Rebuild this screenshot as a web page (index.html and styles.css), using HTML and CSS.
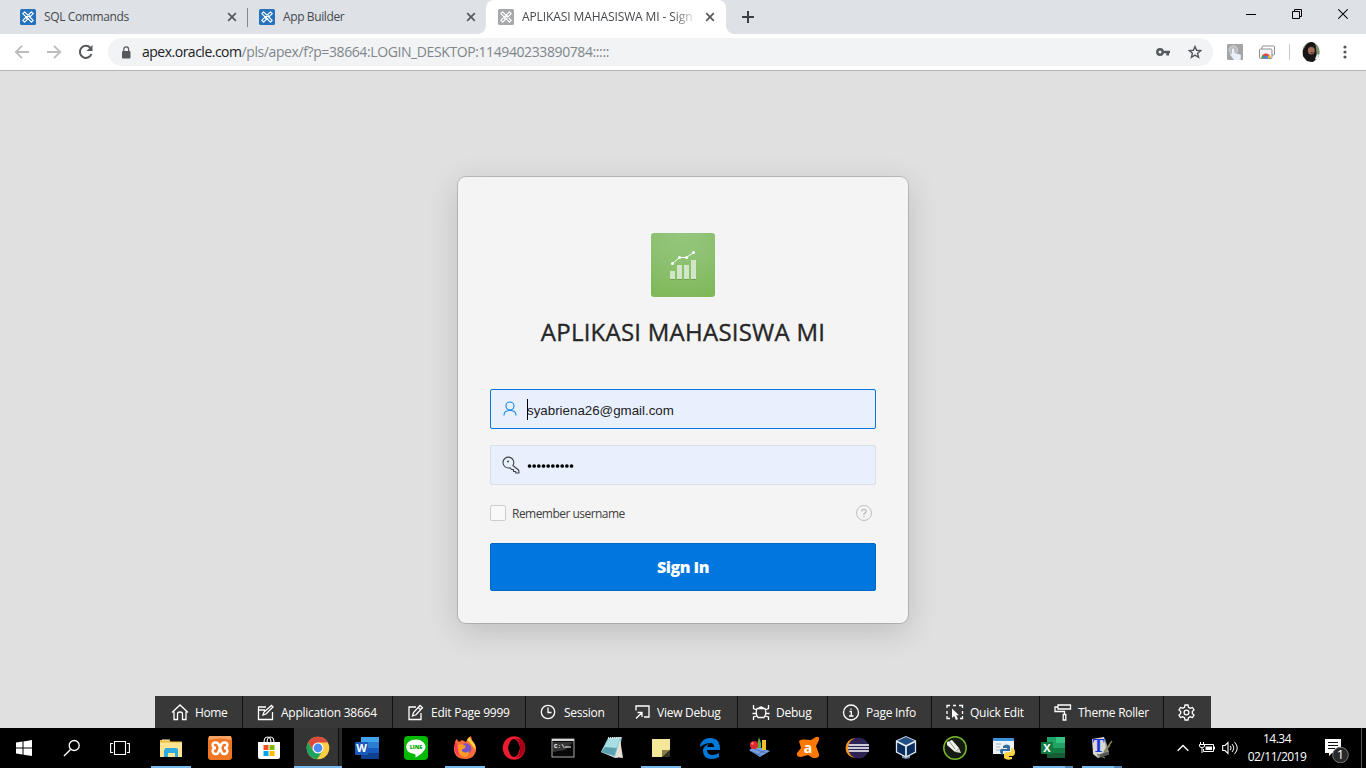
FILE: index.html
```html
<!DOCTYPE html>
<html lang="id">
<head>
<meta charset="utf-8">
<title>APLIKASI MAHASISWA MI - Sign In</title>
<link rel="stylesheet" href="styles.css">
</head>
<body>
<svg class="defs" width="0" height="0">
  <symbol id="apex" viewBox="0 0 16 16">
    <rect width="16" height="16" rx="1.5" fill="currentColor"/>
    <path d="M2.800 4.600 4.600 2.800 13.200 11.400 11.400 13.200ZM2.800 11.400 11.400 2.800 13.200 4.600 4.600 13.200Z" fill="currentColor" stroke="#fff" stroke-width="1.2" stroke-linejoin="round"/>
    <path d="M6.200 9.800 9.800 6.200" stroke="#fff" stroke-width="1"/>
  </symbol>
  <symbol id="close" viewBox="0 0 10 10"><path d="M1.2 1.2 8.8 8.8M8.8 1.2 1.2 8.8" stroke="#55595d" stroke-width="1.7"/></symbol>
</svg>

<header class="browser">
  <div class="tabs">
    <div class="tab tab-first"><svg class="favicon"><use href="#apex"/></svg><span class="tab-title">SQL Commands</span><svg class="tab-close"><use href="#close"/></svg></div>
    <div class="tab tab-second"><svg class="favicon"><use href="#apex"/></svg><span class="tab-title">App Builder</span><svg class="tab-close"><use href="#close"/></svg></div>
    <div class="tab tab-active"><svg class="favicon"><use href="#apex"/></svg><span class="tab-title">APLIKASI MAHASISWA MI - Sign</span><svg class="tab-close"><use href="#close"/></svg></div>
    <svg class="new-tab" width="12" height="12"><path d="M6 0V12M0 6H12" stroke="#3c4043" stroke-width="2"/></svg>
    <div class="window-controls">
      <svg width="10" height="12"><path d="M0 6.500H10" stroke="#000"/></svg>
      <svg width="10" height="12"><path d="M.5 3.500H7.500V10.500H.5ZM2.500 3V1.500H9.500V8.500H8" fill="none" stroke="#000"/></svg>
      <svg width="10" height="12"><path d="M.3 1.300 9.700 10.700M9.700 1.300.3 10.700" stroke="#000" stroke-width="1.100"/></svg>
    </div>
  </div>
  <div class="toolbar">
    <svg class="nav" width="16" height="16"><path d="M15 8H2M8 1.800 1.800 8 8 14.200" fill="none" stroke="#babcbe" stroke-width="1.800"/></svg>
    <svg class="nav" width="16" height="16"><path d="M1 8H14M8 1.800 14.200 8 8 14.200" fill="none" stroke="#babcbe" stroke-width="1.800"/></svg>
    <svg class="nav" width="16" height="16"><path d="M13.500 10A6 6 0 1 1 12.300 3.800" fill="none" stroke="#55595d" stroke-width="2"/><path d="M14.500 1V7H8.500Z" fill="#55595d"/></svg>
    <div class="address">
      <svg class="lock" width="10" height="13"><rect x="1" y="5" width="8.500" height="7.500" rx="1" fill="#55595d"/><path d="M2.800 5V3.200a2.400 2.400 0 0 1 4.800 0V5" fill="none" stroke="#55595d" stroke-width="1.200"/></svg>
      <span class="url"><span class="host">apex.oracle.com</span><span class="path">/pls/apex/f?p=38664:LOGIN_DESKTOP:114940233890784:::::</span></span>
      <svg class="key" width="14" height="8"><circle cx="4" cy="4" r="2.700" fill="none" stroke="#55595d" stroke-width="2.400"/><path d="M6.500 2.700H14V5.300H13V7.500H10.300V5.300H6.500Z" fill="#55595d"/></svg>
      <svg class="star" width="14" height="14"><path d="M7 1.500 8.600 5.300 12.700 5.600 9.600 8.300 10.600 12.300 7 10.100 3.400 12.300 4.400 8.300 1.300 5.600 5.400 5.300Z" fill="none" stroke="#55595d" stroke-width="1.400"/></svg>
    </div>
    <svg class="ext-hand" width="16" height="16"><rect width="16" height="16" rx="1" fill="#a3a5a7"/><circle cx="6.300" cy="6" r="4.200" fill="#b9bbbd" stroke="#d5d7d9"/><path d="M5 5.500c0-1.500 2.300-1.500 2.300 0V9l6 1.500c1 .3.700 2 .2 5.500H7L3 10.500c0-1 1.300-1 2 0Z" fill="#e9f0fa"/></svg>
    <svg class="ext-cast" width="16" height="15"><rect x="3" y="1" width="12.500" height="9" rx="1" fill="#fff" stroke="#8c8f92"/><rect x=".5" y="4" width="12.500" height="9.500" rx="1" fill="#f4f4f4" stroke="#8c8f92"/><path d="M2.500 13a4.500 4.500 0 0 1 9 0Z" fill="#e9473a"/><path d="M2.500 13a4.500 4.500 0 0 1 1.500-3.300L6 13Z" fill="#35a853"/><path d="M11.500 13A4.500 4.500 0 0 0 10 9.700L8 13Z" fill="#fbbc05"/><circle cx="7" cy="12.200" r="1.800" fill="#4285f4"/></svg>
    <span class="toolbar-rule"></span>
    <svg class="avatar" width="18" height="20"><ellipse cx="9" cy="10" rx="8.700" ry="10" fill="#7d936f"/><path d="M10 0c-6 0-7 6-9 8v6l4 5 6 1 4-4-1-10Q14 1 10 0Z" fill="#171518"/><ellipse cx="9.300" cy="8.500" rx="3.400" ry="4" fill="#a46f59"/><path d="M6 6Q9 2 13 6L9 5Z" fill="#342426"/><path d="M8 10h4l-2 2Z" fill="#5f3434"/><path d="M15 12l2 1-2 5-2-1Z" fill="#ededf0"/></svg>
    <svg class="menu-dots" width="4" height="14" fill="#55595d"><circle cx="2" cy="2" r="1.600"/><circle cx="2" cy="7" r="1.600"/><circle cx="2" cy="12" r="1.600"/></svg>
  </div>
</header>

<main class="page">
  <form class="card">
    <svg class="app-logo" width="64" height="64">
      <defs><radialGradient id="green" cx=".5" cy="0" r="1"><stop offset="0" stop-color="#95c77c"/><stop offset=".5" stop-color="#8dc171"/><stop offset="1" stop-color="#80b95c"/></radialGradient></defs>
      <rect width="64" height="64" rx="3" fill="url(#green)"/>
      <path d="M19 46.500h5m2 0h5m2 0h5m2 0h5" stroke="#6da34e"/>
      <path d="M19 38h5v8h-5ZM26 32h5v14h-5ZM33 32h5v14h-5ZM40 27h5v19h-5Z" fill="#d1e6c6"/>
      <path d="M21.500 30.500 28.500 24.500H35.500L42.500 19.500" fill="none" stroke="#fff"/>
      <g fill="#fff"><circle cx="21.500" cy="30.500" r="1.500"/><circle cx="28.500" cy="24.500" r="1.500"/><circle cx="35.500" cy="24.500" r="1.500"/><circle cx="42.500" cy="19.500" r="1.500"/></g>
    </svg>
    <h1 class="card-title">APLIKASI MAHASISWA MI</h1>
    <div class="field field-focus">
      <svg width="18" height="18"><circle cx="9" cy="6" r="4" fill="none" stroke="currentColor" stroke-width="1.100"/><path d="M3 15.500c0-2.500.8-4 3-4.500 1.500 0 2-.5 3-1 1 .5 1.500 1 3 1 2.200.5 3 2 3 4.500" fill="none" stroke="currentColor" stroke-width="1.100"/></svg>
      <span class="caret"></span><span class="email">syabriena26@gmail.com</span>
    </div>
    <div class="field">
      <svg width="18" height="18"><path d="M10.900 9.500 16.800 14.300 17 17H13.700V15.500H11.500V13.500H9.500L8 11.700A5.400 5.400 0 1 1 10.900 9.500Z" fill="none" stroke="#404040" stroke-width="1.100" stroke-linejoin="round"/><circle cx="6" cy="5.500" r="1" fill="#404040"/></svg>
      <svg class="dots" width="48" height="6"><path d="M2.500 3H46" stroke="#000" stroke-width="3.700" stroke-linecap="round" stroke-dasharray="0 4.670"/></svg>
    </div>
    <div class="remember">
      <span class="checkbox"></span><span class="remember-label">Remember username</span>
      <svg class="help" width="16" height="16"><circle cx="8" cy="8" r="7.500" fill="none" stroke="#c0c0c0"/><path d="M5.800 6.500Q5.800 4.400 8 4.400T10.200 6.400Q10.200 7.600 8 8.800V10M8 11V12.200" fill="none" stroke="#b8b8b8" stroke-width="1.300"/></svg>
    </div>
    <div class="signin"><span>Sign In</span></div>
  </form>

  <nav class="devbar">
    <div class="dev dev-home"><svg><path d="M1 8.500 9 1 17 8.500M3 7.500V15.500H6.500V10Q6.500 8 9 8T11.500 10V15.500H15V7.500"/></svg><span>Home</span></div>
    <div class="dev dev-app"><svg><path d="M9 3H1.500V15.500H15.500V8M1.500 6H8M6 11l1-3 7.500-6.500 1.500 1.500L9 10Z"/></svg><span>Application 38664</span></div>
    <div class="dev dev-edit"><svg><path d="M9 3H2V15.500H14V9M5.500 12 6.500 8.500 13 1.500 15.500 3.800 9 10.800ZM11.200 3.400 13.700 5.700"/></svg><span>Edit Page 9999</span></div>
    <div class="dev dev-session"><svg><circle cx="8" cy="8" r="6.700"/><path d="M8 3.500V8.500H11.500"/></svg><span>Session</span></div>
    <div class="dev dev-view"><svg><path d="M3 6.500V2H16V13H11M3 14.500 9 8.500M4.500 8.500H9V13"/></svg><span>View Debug</span></div>
    <div class="dev dev-debug"><svg><path d="M5 4.500H13Q15 10 12 13.500H6Q3 10 5 4.500ZM6.500 4.500Q9 1.500 11.500 4.500M5 6 1.500 4.500V1M13 6 16.500 4.500V1M4 9.500H.5M14 9.500H17.500M5 12 1.500 13V16M13 12 16.500 13V16"/></svg><span>Debug</span></div>
    <div class="dev dev-info"><svg><circle cx="9" cy="8.500" r="7.500"/><path d="M7.500 7.500H9.300V12M7 12H11.500M9 4.500V5.800"/></svg><span>Page Info</span></div>
    <div class="dev dev-quick"><svg><path d="M1 4V1.500H4M7 1.500H10M13 1.500H16.500V4M1 7V10M1 12V14.500H4M16.500 7V10M16.500 12V14.500H14" /><path d="M6 4.500V14L8.200 12 10 16 12 15 10.200 11.200H13Z" fill="#fff" stroke="none"/></svg><span>Quick Edit</span></div>
    <div class="dev dev-theme"><svg><path d="M4 1H16.500V5H4ZM4 3H1V7.500H10.500V10M9.200 10.500H11.800V16H9.200Z"/></svg><span>Theme Roller</span></div>
    <div class="dev dev-gear"><svg><circle cx="8.500" cy="8.500" r="2.400"/><path d="M7 1H10L10.500 3.300 12.200 4.200 14.500 3.500 16 6 14.300 7.600V9.400L16 11 14.500 13.500 12.200 12.800 10.500 13.700 10 16H7L6.500 13.700 4.800 12.800 2.500 13.500 1 11 2.700 9.400V7.600L1 6 2.500 3.500 4.800 4.200 6.500 3.300Z"/></svg></div>
  </nav>
</main>

<footer class="taskbar">
  <div class="sys"><svg width="16" height="16"><path d="M0 2.500 6.500 1.600V7.500H0ZM7.500 1.400 16 0V7.500H7.500ZM0 8.500H6.500V14.500L0 13.600ZM7.500 8.500H16V16L7.500 14.700Z" fill="#fff"/></svg></div>
  <div class="sys"><svg width="18" height="18"><circle cx="11.200" cy="6.500" r="5" fill="none" stroke="#fff" stroke-width="1.300"/><path d="M7.500 10.500 1 17" stroke="#fff" stroke-width="1.400"/></svg></div>
  <div class="sys"><svg width="20" height="16"><path d="M4.500 1.500H15.500V14.500H4.500ZM3 3.500H.6V12.500H3M17 3.500H19.400V12.500H17" fill="none" stroke="#fff" stroke-width="1.100"/></svg></div>
  <div class="apps">
    <div class="app open"><svg viewBox="0 0 24 24"><path d="M1 4h9l1.500 1.500H23V21H1Z" fill="#e9bb45"/><path d="M1 6.500H23V21H1Z" fill="#ffe592"/><path d="M3 3.500h8v1H3Z" fill="#fff4be"/><path d="M6 13Q6 12 7 12H17Q19 12 19 14V21H16V17H9V21H5V14Z" fill="#2eaae3"/></svg></div>
    <div class="app"><svg viewBox="0 0 24 24"><rect width="24" height="24" rx="3" fill="#ee7623"/><path d="M1 0H23V4Q12 1 1 4Z" fill="#f7a366"/><path d="M8 6.500C3 6 4 12 8 12C3 12 4 18.500 8 18C11 18 11 14.500 12 12C13 14.500 13 18 16 18C20 18.500 21 12 16 12C20 12 21 6 16 6.500C13 6.500 13 9.500 12 12C11 9.500 11 6.500 8 6.500Z" fill="none" stroke="#fff" stroke-width="2.500"/></svg></div>
    <div class="app"><svg viewBox="0 0 24 24"><path d="M7 7Q7 1 10.500 1T14 7M10 7Q10 1 13.500 1T17 7" fill="none" stroke="#fff" stroke-width="1.100"/><path d="M1 6H23V21Q23 23 21 23H3Q1 23 1 21Z" fill="#fff"/><path d="M6.500 9H11.500V14H6.500Z" fill="#f25022"/><path d="M12.500 9H17.500V14H12.500Z" fill="#7fba00"/><path d="M6.500 15H11.500V20H6.500Z" fill="#00a4ef"/><path d="M12.500 15H17.500V20H12.500Z" fill="#ffb900"/></svg></div>
    <div class="app chrome open"><svg viewBox="0 0 24 24"><circle cx="12" cy="12" r="11.300" fill="#ffcd42"/><path d="M2.200 6.300A11.300 11.300 0 0 1 21.900 6.500H12L7.300 14.800Z" fill="#dc4a3d"/><path d="M2.200 6.300A11.300 11.300 0 0 0 11 23.200L16.800 14.700H7Z" fill="#1da260"/><circle cx="12" cy="12" r="5.500" fill="#fff"/><circle cx="12" cy="12" r="4.400" fill="#4c8bf5"/></svg></div>
    <div class="app"><svg viewBox="0 0 24 24"><path d="M6 1H24V7H6Z" fill="#41a5ee"/><path d="M6 6H24V12H6Z" fill="#2b7cd3"/><path d="M6 12H24V17H6Z" fill="#185abd"/><path d="M6 17H24V23H6Z" fill="#103f91"/><rect y="6" width="13" height="13" rx="1" fill="#185abd"/><text x="6.500" y="16.400" class="glyph-word">W</text></svg></div>
    <div class="app"><svg viewBox="0 0 24 24"><rect width="24" height="24" rx="4" fill="#00b900"/><path d="M12 3.500C1 4 0 13 5.500 16.500L11.500 18.500V21.500C18 18 21.500 14 21.500 11 21.500 7 17 3.500 12 3.500Z" fill="#fff"/><text x="12" y="13.200" class="glyph-line">LINE</text></svg></div>
    <div class="app open"><svg viewBox="0 0 24 24"><path d="M2 6 3.500 3 6 6 9 4 13 6 15 2 18 0 19 4Q24 10 23 15C21 21 18 23 12 23 5 23 1 19 1 13Z" fill="#ff6b35"/><path d="M14 4 16.500 1 19 5Q23 8 22.500 14L18 8Z" fill="#ffd53e"/><path d="M2 6Q0 16 6 20.500L4 8Z" fill="#ff365d"/><circle cx="12.500" cy="13" r="5.800" fill="#7852ca"/><path d="M5 9 9 8 13 10 11 13Q8 12 9 15 12 18 16 15 16 21 11 21 4 18 5 9Z" fill="#ff9b24"/></svg></div>
    <div class="app"><svg viewBox="0 0 24 24"><ellipse cx="12" cy="12" rx="8.500" ry="9" fill="none" stroke="#ed1c2e" stroke-width="5.500"/><ellipse cx="12" cy="12" rx="5.500" ry="9" fill="#000"/><path d="M14 2Q24 3 23 12T14 22Q18 19 18 12T14 2Z" fill="#a70014"/></svg></div>
    <div class="app"><svg viewBox="0 0 24 24"><rect x="1" y="3" width="22" height="18" fill="#080808" stroke="#aaa"/><path d="M1 3H23V5H1Z" fill="#d5d5d5"/><path d="M2 6H22L14 14 2 16Z" fill="#343434"/><text x="3" y="11.500" class="glyph-cmd">C:\</text><path d="M14 11H20" stroke="#fff"/></svg></div>
    <div class="app"><svg viewBox="0 0 24 24"><path d="M8 2 22 1 18 22 1 16Z" fill="#81c4d0"/><path d="M9 2 20 1 14 20 1 16Z" fill="#a8dfe5"/><path d="M5 11 17 12 14 20 1 16Z" fill="#5aa2af"/><path d="M20 3 23 22 15 21Z" fill="#e5e1d5"/><path d="M8 2H22" stroke="#d8e0e2" stroke-width="2" stroke-dasharray="1 1"/><path d="M1 16 14 20 18 22 15 22Z" fill="#ccdadb"/></svg></div>
    <div class="app open"><svg viewBox="0 0 24 24"><path d="M3 3H21V14L13 21H3Z" fill="#f4e79a"/><path d="M13 14H21L13 21Z" fill="#877f45"/><path d="M21 14V21H13Z" fill="#353324"/></svg></div>
    <div class="app"><svg viewBox="0 0 24 24"><path d="M2 10Q4 2 12 2 22 2 22 13V14H9Q9 19 15 19 18 19 21 17V21Q18 23 13 23 5 22 5 15 5 10 12 7 7 7 2 11ZM9 11H16Q16 7 12.500 7 9.500 8 9 11Z" fill="#0078d7"/></svg></div>
    <div class="app"><svg viewBox="0 0 24 24"><path d="M2 14 9 10 23 15 13 21Z" fill="#7b9fdd"/><path d="M3 15 15 20M7 13 19 17M10 19 19 14" stroke="#4068b2" stroke-width=".7"/><path d="M10 9 12 1 14 7 14 12H10Z" fill="#5cae45"/><rect x="15" y="4" width="4" height="10" fill="#efc12b"/><circle cx="7" cy="9" r="4" fill="#df2830"/><circle cx="5.500" cy="7.500" r="1.200" fill="#ff7b76"/></svg></div>
    <div class="app"><svg viewBox="0 0 24 24"><path d="M3 5Q5 3 8 3.500L15 4 20 1Q24 0 23 4L20 10 23 18Q24 21 20 22H17L12 19 5 21Q0 21 1 17L5 12Z" fill="#ff7800"/><text x="12" y="16.500" class="glyph-avast">a</text></svg></div>
    <div class="app"><svg viewBox="0 0 24 24"><circle cx="10.500" cy="12" r="10" fill="#f7941e"/><circle cx="13.500" cy="12" r="10.500" fill="#2c2255"/><path d="M3.500 9H24M3 12H24M3.500 15H24" stroke="#fff" stroke-width="1.700"/></svg></div>
    <div class="app"><svg viewBox="0 0 24 24"><path d="M8 17H16V22L12 23 8 22Z" fill="#7588a6"/><path d="M12 .8 21.500 5V16L12 21 2.500 16V5Z" fill="#0c2e5c" stroke="#dce5f0" stroke-width="1.300"/><path d="M12 1 21 5 12 9.500 3 5Z" fill="#214f83"/><path d="M3 5.500 12 10 21 5.500M12 10V20" fill="none" stroke="#e9f0f7" stroke-width="1.700"/></svg></div>
    <div class="app"><svg viewBox="0 0 24 24"><circle cx="12" cy="12" r="11.200" fill="#151b11" stroke="#76b82a" stroke-width="1.500"/><path d="M4 6 9 4 16 12 12 16 4 9Z" fill="#f2f2ec"/><path d="M12 16 16 12 18 17Z" fill="#d8d8cc"/><path d="M6 5 12 13" stroke="#8d9387"/></svg></div>
    <div class="app"><svg viewBox="0 0 24 24"><path d="M1 2H22V18H1Z" fill="#ecf1f6"/><path d="M1 2H22V5H1Z" fill="#3b92dc"/><path d="M4 8H9M4 11H8M4 14H8" stroke="#a8b3bc"/><path d="M11 10Q15 7 18 10V15H11V19Q8 18 8 15T11 13H15V12H11Z" fill="#346c9e"/><path d="M19 12Q23 12 23 16T20 20H17V21H20V23Q15 25 12 22V18L14 16H19Z" fill="#ffd545"/></svg></div>
    <div class="app open stacked"><svg viewBox="0 0 24 24"><path d="M6 1H15V12H6Z" fill="#21a366"/><path d="M15 1H24V7H15Z" fill="#33c481"/><path d="M15 7H24V12H15Z" fill="#21a366"/><path d="M6 12H24V17H6Z" fill="#107c41"/><path d="M6 17H24V22H6Z" fill="#185c37"/><rect y="6" width="12" height="12" rx="1" fill="#107c41"/><text x="6" y="16" class="glyph-word">X</text></svg></div>
    <div class="app open stacked"><svg viewBox="0 0 24 24"><path d="M2 3 14 1 19 17 8 22 3 18Z" fill="#d8d8d8"/><path d="M15 2 19 17 8 22 7 19 16 16Z" fill="#999"/><path d="M11 21 20 9M14 16 22 5M7 18 15 22" stroke="#898256" stroke-width="1.300"/><path d="M10 20 19 17" stroke="#555" stroke-width="3"/><text x="8.500" y="16" class="glyph-t">T</text></svg></div>
  </div>
  <div class="tray">
    <svg class="chevron" width="12" height="8"><path d="M.7 6.800 6 1.500 11.300 6.800" fill="none" stroke="#fff" stroke-width="1.400"/></svg>
    <svg class="battery" width="16" height="12"><path d="M5 2.500H14.500V9.500H4.500V7M15.500 4.500V7.500M1.500 0V3M4.500 0V3M.5 2.500V4Q.5 5.500 3 5.500T5.500 4V2.500H.5M3 6V11" fill="none" stroke="#fff"/><path d="M6.500 4.500H13V8H6.500Z" fill="#fff"/></svg>
    <svg class="sound" width="17" height="14"><path d="M.7 4.500H3L6 1.500V12.500L3 9.500H.7Z" fill="none" stroke="#fff" stroke-width="1.100"/><path d="M8 5Q10 7 8 9M10 3Q13.500 7 10 11M12.500 1Q18 7 12.500 13" fill="none" stroke="#ddd" stroke-width="1.100"/></svg>
    <div class="clock"><span class="time">14.34</span><span class="date">02/11/2019</span></div>
    <svg class="notes" width="24" height="26"><path d="M0 2H16V16H7L4 19V16H0Z" fill="#fff"/><path d="M3 5.500H13M3 8.500H13M3 11.500H10" stroke="#111"/><circle cx="15.500" cy="18" r="7.800" fill="#292929" stroke="#777"/><text x="15.500" y="22.400" class="note-count">1</text></svg>
    <span class="peek"></span>
  </div>
</footer>
</body>
</html>
```
FILE: styles.css
```css
* { box-sizing: border-box; }
body { margin: 0; width: 1366px; height: 768px; overflow: hidden; display: flex; flex-direction: column; font-family: "Open Sans", "Noto Sans", sans-serif; font-size: 12px; background: #e0e0e0; }
svg { display: block; flex: none; }
span { white-space: nowrap; }
.defs { position: absolute; }

/* Browser frame */
.browser { height: 71px; flex: none; border-bottom: 1px solid #b5b3b5; background: #fff; }
.tabs { height: 34px; display: flex; background: #dee1e6; }
.tab { height: 34px; display: flex; align-items: center; color: #45494d; }
.tab-first { width: 248px; padding: 0 11px 0 20px; background: linear-gradient(#85888c, #85888c) 247px 8px / 1px 19px no-repeat; }
.tab-second { width: 238px; padding: 0 10px 0 11px; }
.tab-active { width: 240px; padding: 0 11px 0 12px; background: #fff; border-radius: 8px 8px 0 0; position: relative; }
.tab-active::before, .tab-active::after { content: ""; position: absolute; bottom: 0; width: 8px; height: 8px; }
.tab-active::before { left: -8px; background: radial-gradient(circle at 0 0, transparent 7.500px, #fff 8px); }
.tab-active::after { right: -8px; background: radial-gradient(circle at 100% 0, transparent 7.500px, #fff 8px); }
.favicon { width: 16px; height: 16px; margin-right: 8px; color: #2672bd; }
.tab-active .favicon { color: #a6a9ac; }
.tab-title { flex: 1; margin-right: 10px; line-height: 20px; letter-spacing: -.38px; }
.tab-active .tab-title { flex: none; width: 173px; letter-spacing: -.1px; -webkit-mask-image: linear-gradient(90deg, #000 150px, transparent 176px); mask-image: linear-gradient(90deg, #000 150px, transparent 176px); }
.tab-close { width: 10px; height: 10px; }
.new-tab { margin: 11px 0 0 16px; }
.window-controls { margin: 8px 18px 0 auto; display: flex; gap: 36px; }
.toolbar { height: 36px; display: flex; align-items: center; padding-left: 14px; }
.nav { margin-right: 16px; }
.address { width: 1105px; height: 28px; margin-left: -2px; border-radius: 14px; background: #f1f3f4; display: flex; align-items: center; padding-left: 13px; }
.lock { margin-right: 11px; }
.url { font-size: 14px; line-height: 20px; width: 1014px; color: #80868b; }
.host { color: #202124; letter-spacing: -.5px; }
.path { letter-spacing: -.4px; }
.star { margin-left: 18px; }
.ext-hand { margin-left: 14px; }
.ext-cast { margin-left: 16px; }
.toolbar-rule { width: 1px; height: 16px; background: #c7c9cc; margin-left: 14px; }
.avatar { margin-left: 12px; }
.menu-dots { margin-left: 23px; }

/* Sign-in page */
.page { height: 657px; display: flex; flex-direction: column; align-items: center; padding-top: 106px; background: #e0e0e0; }
.card { width: 450px; height: 446px; border-radius: 8px; background: #f4f4f4; padding: 56px 32px 32px; display: flex; flex-direction: column; box-shadow: 0 0 0 1px rgba(0,0,0,.15), 0 8px 32px rgba(0,0,0,.16); }
.app-logo { align-self: center; }
.card-title { margin: 19px 0 41px; height: 32px; line-height: 32px; font-size: 24px; font-weight: 500; letter-spacing: .24px; -webkit-text-stroke: .35px #262626; color: #262626; text-align: center; white-space: nowrap; }
.field { height: 40px; margin-bottom: 16px; display: flex; align-items: center; border: 1px solid #dcdee3; border-radius: 2px; background: #e8f0fe; padding-left: 11px; }
.field > svg:first-child { margin-right: -1px; }
.field-focus { border-color: #0076df; color: #1685e4; padding-left: 10px; }
.caret { width: 1px; height: 21px; margin-left: 9px; background: #000; }
.email { font-family: "Liberation Sans", Arial, sans-serif; font-size: 13.330px; color: #202124; margin: 2px 0 0 -1px; }
.dots { margin: 2px 0 0 8px; }
.remember { height: 24px; display: flex; align-items: center; padding-right: 4px; color: #404040; }
.remember-label { letter-spacing: -.53px; }
.checkbox { width: 16px; height: 16px; border: 1px solid #ccc; border-radius: 2px; background: #f9f9f9; margin-right: 6px; }
.help { margin-left: auto; }
.signin { height: 48px; margin-top: 18px; border: 1px solid #0069c7; border-radius: 2px; background: #0076df; color: #fff; font-size: 16px; font-weight: 800; letter-spacing: -.5px; display: flex; align-items: center; justify-content: center; }

/* Developer bar */
.devbar { width: 1056px; height: 32px; margin-top: auto; display: flex; background: #383838; color: #fff; }
.dev { height: 32px; display: flex; align-items: center; padding-left: 14px; border-right: 1px solid #101010; flex: none; }
.dev svg { width: 18px; height: 17px; margin-right: 6px; fill: none; stroke: #fff; stroke-width: 1.300; }
.dev span { line-height: 18px; padding-top: 2px; letter-spacing: -.25px; }
.dev-home { width: 88px; padding-left: 16px; }
.dev-home span { letter-spacing: -.4px; }
.dev-app { width: 150px; }
.dev-edit { width: 133px; }
.dev-session { width: 93px; }
.dev-view { width: 119px; }
.dev-debug { width: 90px; }
.dev-info { width: 104px; }
.dev-quick { width: 108px; }
.dev-theme { width: 124px; }
.dev-gear { width: 47px; border-right: 0; }

/* Desktop taskbar */
.taskbar { height: 40px; display: flex; background: #000; color: #fff; }
.sys { width: 48px; display: flex; align-items: center; justify-content: center; }
.apps { margin-left: 3px; display: flex; }
.app { width: 49px; height: 40px; padding-right: 2px; display: flex; align-items: center; justify-content: center; }
.app svg { width: 24px; height: 24px; }
.open { background: linear-gradient(#76b9ed, #76b9ed) 4px 38px / 40px 2px no-repeat; }
.chrome { background: linear-gradient(#76b9ed, #76b9ed) 0 38px / 48px 2px no-repeat, linear-gradient(90deg, #343434 44px, #111 44px, #111 45px, #292929 45px, #292929 48px, #000 48px); }
.stacked { background: linear-gradient(90deg, #76b9ed 32px, #5087b6 32px) 4px 38px / 40px 2px no-repeat; }
.glyph-word { font: 700 11px "Open Sans", sans-serif; fill: #fff; text-anchor: middle; }
.glyph-line { font: 800 5.500px "Open Sans", sans-serif; fill: #00a900; text-anchor: middle; }
.glyph-cmd { font: 700 6px "Liberation Mono", monospace; fill: #fff; }
.glyph-avast { font: 700 14px "Open Sans", sans-serif; fill: #fff; text-anchor: middle; }
.glyph-t { font: 700 18px "Liberation Serif", serif; fill: #1837d6; text-anchor: middle; }
.tray { margin-left: auto; display: flex; align-items: center; height: 40px; }
.battery { margin-left: 10px; }
.sound { margin-left: 7px; }
.clock { width: 72px; margin-left: 2px; display: flex; flex-direction: column; align-items: center; line-height: 18px; padding-bottom: 1px; letter-spacing: -.5px; }
.notes { margin: 3px 0 0 12px; }
.note-count { font: 13px "Open Sans", sans-serif; fill: #fff; text-anchor: middle; }
.peek { width: 1px; height: 40px; background: #555; margin: 0 4px 0 12px; }
```
